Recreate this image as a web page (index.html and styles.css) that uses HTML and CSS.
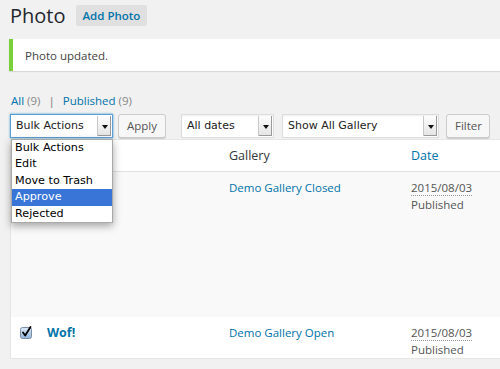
FILE: index.html
```html
<!DOCTYPE html>
<html lang="en">
  <head>
    <meta charset="UTF-8" />
    <meta name="viewport" content="width=device-width, initial-scale=1.0" />
    <title>Photo</title>
    <link rel="stylesheet" href="styles.css">
  </head>
  <body>
    <div class="wrap">
      <div class="page-head">
        <h1 class="page-title">Photo</h1>
        <a class="add-btn" href="#">Add Photo</a>
      </div>

      <div class="notice">Photo updated.</div>

      <ul class="subsubsub">
        <li><a href="#">All</a> <span class="count">(9)</span></li>
        <li class="sep">|</li>
        <li><a href="#">Published</a> <span class="count">(9)</span></li>
      </ul>

      <div class="tablenav">
        <div class="bulk-wrap">
          <div class="select select-focus select-bulk">
            <span class="select-text">Bulk Actions</span>
            <span class="select-arrow"></span>
          </div>
          <ul class="dropdown">
            <li>Bulk Actions</li>
            <li>Edit</li>
            <li>Move to Trash</li>
            <li class="active">Approve</li>
            <li>Rejected</li>
          </ul>
        </div>
        <button class="btn btn-apply">Apply</button>
        <div class="select select-dates">
          <span class="select-text">All dates</span>
          <span class="select-arrow"></span>
        </div>
        <div class="select select-gallery">
          <span class="select-text">Show All Gallery</span>
          <span class="select-arrow"></span>
        </div>
        <button class="btn btn-filter">Filter</button>
      </div>

      <div class="list-table">
        <div class="row row-head">
          <div class="cell cell-cb"><span class="cb"></span></div>
          <div class="cell cell-title"></div>
          <div class="cell">Gallery</div>
          <div class="cell"><a href="#">Date</a></div>
        </div>
        <div class="row row-alt row-tall">
          <div class="cell cell-cb"><span class="cb"></span></div>
          <div class="cell cell-title"></div>
          <div class="cell"><a href="#">Demo Gallery Closed</a></div>
          <div class="cell cell-date">
            <abbr title="2015/08/03">2015/08/03</abbr>
            <div>Published</div>
          </div>
        </div>
        <div class="row">
          <div class="cell cell-cb">
            <svg class="cb-checked" width="14" height="15" viewBox="0 0 14 15">
              <defs>
                <linearGradient id="cbg" x1="0" y1="0" x2="0" y2="1">
                  <stop offset="0" stop-color="#dcebfa"/>
                  <stop offset="1" stop-color="#8fb3dc"/>
                </linearGradient>
              </defs>
              <rect x="0.5" y="2.5" width="11" height="11" rx="2" fill="url(#cbg)" stroke="#7d8ea3"/>
              <path d="M3 7.5 L5.2 10.5 L10.5 2" fill="none" stroke="#000" stroke-width="1.8" stroke-linecap="round" stroke-linejoin="round"/>
            </svg>
          </div>
          <div class="cell cell-title"><a class="row-title" href="#">Wof!</a></div>
          <div class="cell"><a href="#">Demo Gallery Open</a></div>
          <div class="cell cell-date">
            <abbr title="2015/08/03">2015/08/03</abbr>
            <div>Published</div>
          </div>
        </div>
      </div>
    </div>
  </body>
</html>
```

FILE: styles.css
```css
/* Photo list */
body {
  margin: 0;
  background-color: #f1f1f1;
  font-family: "Open Sans", Arial, sans-serif;
  font-size: 11.5px;
  color: #444;
  overflow: hidden;
}

a {
  color: #0073aa;
  text-decoration: none;
}

.wrap {
  padding-left: 10px;
}

.page-head {
  display: flex;
  align-items: center;
  gap: 10px;
  padding-top: 1px;
}

.page-title {
  margin: 0;
  font-size: 20px;
  font-weight: 400;
  line-height: 29px;
  color: #23282d;
}

.add-btn {
  display: inline-block;
  height: 21px;
  line-height: 21px;
  padding: 0 7px;
  background-color: #e0e0e0;
  border-radius: 2px;
  font-weight: 600;
}

.notice {
  margin: 9px 0 0 -1px;
  height: 32px;
  line-height: 33px;
  padding-left: 12px;
  background-color: #fff;
  border-left: 4px solid #7ad03a;
  box-shadow: 0 1px 1px rgba(0, 0, 0, 0.1);
  color: #444;
}

.subsubsub {
  display: flex;
  gap: 6px;
  list-style: none;
  margin: 21px 0 0 1px;
  padding: 0;
  line-height: 18px;
}

.subsubsub .count {
  color: #888;
}

.subsubsub .sep {
  color: #777;
  padding: 0 2px;
}

.tablenav {
  display: flex;
  align-items: center;
  margin-top: 3px;
  height: 25px;
}

.bulk-wrap {
  position: relative;
}

.select {
  display: flex;
  align-items: stretch;
  height: 22px;
  background-color: #fff;
  border: 1px solid #ddd;
  box-shadow: inset 0 1px 2px rgba(0, 0, 0, 0.07);
  font-family: "DejaVu Sans", sans-serif;
  font-size: 11px;
  color: #222;
}

.select-text {
  flex: 1;
  line-height: 22px;
  padding-left: 5px;
}

.select-arrow {
  position: relative;
  width: 13px;
  margin: 1px 1px 1px 0;
  background: linear-gradient(#fdfdfd, #e4e4e4);
  border-left: 1px solid #c8c8c8;
  box-shadow: inset -1px -1px 0 #9a9a9a;
}

.select-arrow::after {
  content: "";
  position: absolute;
  left: 4px;
  top: 9px;
  border-left: 3px solid transparent;
  border-right: 3px solid transparent;
  border-top: 4px solid #111;
}

.select-focus {
  border-color: #5b9dd9;
  box-shadow: 0 0 2px rgba(30, 140, 190, 0.8);
}

.select-bulk {
  width: 101px;
}

.select-dates {
  width: 91px;
  margin-left: 15px;
}

.select-gallery {
  width: 155px;
  margin-left: 8px;
}

.btn {
  height: 24px;
  padding: 0 8px;
  background-color: #f7f7f7;
  border: 1px solid #ccc;
  border-radius: 3px;
  box-shadow: 0 1px 0 #ccc;
  font-family: "Open Sans", Arial, sans-serif;
  font-size: 11.5px;
  color: #555;
}

.btn-apply {
  width: 48px;
  margin-left: 5px;
}

.btn-filter {
  width: 44px;
  margin-left: 7px;
}

.dropdown {
  position: absolute;
  left: 1px;
  top: calc(100% + 1px);
  width: 100px;
  margin: 0;
  padding: 0;
  list-style: none;
  background-color: #fff;
  border: 1px solid #a9a9a9;
  box-shadow: 0 3px 8px rgba(0, 0, 0, 0.35);
  font-family: "DejaVu Sans", sans-serif;
  font-size: 11.2px;
  color: #000;
  z-index: 10;
}

.dropdown li {
  height: 16.6px;
  line-height: 16.6px;
  padding-left: 3px;
}

.dropdown li.active {
  background-color: #3875d7;
  color: #fff;
}

.list-table {
  margin-top: 1px;
  width: calc(100% + 10px);
  background-color: #fff;
  border: 1px solid #e5e5e5;
  box-shadow: 0 1px 1px rgba(0, 0, 0, 0.04);
}

.row {
  display: grid;
  grid-template-columns: 29px 180px 182px 1fr;
  line-height: 17px;
}

.row-head {
  height: 31px;
  align-items: center;
  border-bottom: 1px solid #e1e1e1;
  font-size: 12.5px;
  color: #32373c;
}

.row-head .cell {
  padding-top: 0;
}

.row-alt {
  background-color: #f9f9f9;
}

.row-tall {
  height: 145px;
}

.cell {
  padding: 7px 9px 0;
}

.cell-cb {
  padding-left: 9px;
}

.cell-title {
  padding-left: 7px;
}

.row-title {
  font-size: 12.5px;
  font-weight: 700;
}

.cell-date {
  color: #555;
}

.cell-date abbr {
  text-decoration: none;
  border-bottom: 1px dotted #999;
}

.cb {
  display: inline-block;
  width: 12px;
  height: 12px;
  border: 1px solid #b4b9be;
  background-color: #fff;
  vertical-align: middle;
}

.cb-checked {
  display: block;
  margin-top: 1px;
}
```
